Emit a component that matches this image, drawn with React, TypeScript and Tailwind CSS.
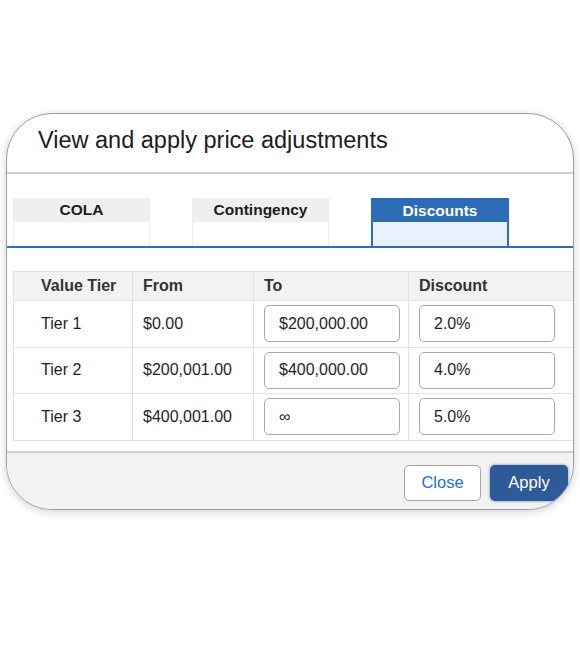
import React from 'react'

const font = { fontFamily: '"Liberation Sans", Arial, sans-serif' }

const tabs = [
  { label: 'COLA', active: false },
  { label: 'Contingency', active: false },
  { label: 'Discounts', active: true },
]

const rows = [
  { tier: 'Tier 1', from: '$0.00', to: '$200,000.00', discount: '2.0%' },
  { tier: 'Tier 2', from: '$200,001.00', to: '$400,000.00', discount: '4.0%' },
  { tier: 'Tier 3', from: '$400,001.00', to: '∞', discount: '5.0%' },
]

const Input: React.FC<{ value: string }> = ({ value }) => (
  <div className="w-[136px] h-[37px] rounded-[5px] border border-[#a9a9a9] bg-white flex items-center pl-[14px] text-[16px] text-[#1f1f1f]">
    {value}
  </div>
)

export default function App() {
  return (
    <div className="w-[580px] h-[662px] bg-white pt-[113px] px-[6px]" style={font}>
      <div className="h-[397px] rounded-[46px] border border-[#9d9d9d] overflow-hidden flex flex-col bg-white shadow-[0_2px_8px_rgba(0,0,0,0.18)]">
        <div className="h-[60px] flex items-center pl-[31px] pb-[4px] border-b-2 border-[#cecece]">
          <h1 className="text-[23.5px] text-[#1c1c1c]">View and apply price adjustments</h1>
        </div>

        <div className="pt-[24px] pl-[6px] flex gap-[42px] border-b-2 border-[#2e6cb5]">
          {tabs.map((tab) =>
            tab.active ? (
              <div key={tab.label} className="w-[138px] h-[48px] flex flex-col bg-[#2c6cb7] border-x-2 border-t-2 border-[#2c6cb7]">
                <div className="h-[22px] flex items-center justify-center text-white font-bold text-[15.5px]">
                  {tab.label}
                </div>
                <div className="flex-1 bg-[#e7f2fc]" />
              </div>
            ) : (
              <div key={tab.label} className="w-[137px] h-[48px] flex flex-col border-x border-[#ececec]">
                <div className="h-[24px] flex items-center justify-center bg-[#efefef] text-[#1c1c1c] font-bold text-[15.5px]">
                  {tab.label}
                </div>
                <div className="flex-1 bg-white" />
              </div>
            )
          )}
        </div>

        <div className="mt-[23px] ml-[6px] border-l border-t border-[#e2e2e2]">
          <div className="grid grid-cols-[119px_121px_155px_1fr] h-[29px] bg-[#f2f2f2] text-[16px] font-bold text-[#333] border-b border-[#e2e2e2]">
            <div className="flex items-center pl-[27px] border-r border-[#e2e2e2]">Value Tier</div>
            <div className="flex items-center pl-[10px] border-r border-[#e2e2e2]">From</div>
            <div className="flex items-center pl-[10px] border-r border-[#e2e2e2]">To</div>
            <div className="flex items-center pl-[10px]">Discount</div>
          </div>
          {rows.map((row) => (
            <div key={row.tier} className="grid grid-cols-[119px_121px_155px_1fr] h-[46.5px] text-[16px] text-[#1f1f1f] border-b border-[#e2e2e2]">
              <div className="flex items-center pl-[27px] border-r border-[#e2e2e2]">{row.tier}</div>
              <div className="flex items-center pl-[10px] border-r border-[#e2e2e2]">{row.from}</div>
              <div className="flex items-center pl-[10px] border-r border-[#e2e2e2]">
                <Input value={row.to} />
              </div>
              <div className="flex items-center pl-[10px]">
                <Input value={row.discount} />
              </div>
            </div>
          ))}
        </div>

        <div className="mt-[10px] flex-1 bg-[#f2f2f2] border-t-2 border-[#d2d2d2] flex justify-end items-start pt-[12px] pr-[5px] gap-[9px]">
          <button className="w-[77px] h-[36px] rounded-[5px] border border-[#a6a6a6] bg-white text-[#1b72d1] text-[16.5px]">
            Close
          </button>
          <button className="w-[78px] h-[36px] rounded-[5px] bg-[#2e5b97] text-white text-[16.5px] shadow-[0_0_3px_rgba(46,91,151,0.7)]">
            Apply
          </button>
        </div>
      </div>
    </div>
  )
}
